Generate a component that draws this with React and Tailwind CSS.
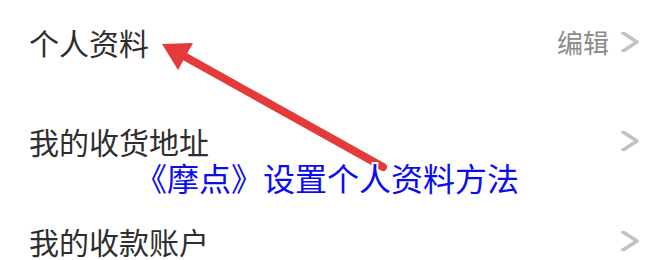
import React from "react";

const rows = [
  { label: "个人资料", extra: "编辑" },
  { label: "我的收货地址" },
  { label: "我的收款账户" },
];

function Chevron() {
  return (
    <svg width="18" height="20" viewBox="0 0 18 20" className="shrink-0">
      <polyline
        points="2,1 16,10 2,19"
        fill="none"
        stroke="#c2c2c2"
        strokeWidth="3.6"
        strokeLinecap="round"
        strokeLinejoin="round"
      />
    </svg>
  );
}

export default function App() {
  return (
    <div
      className="relative h-[260px] w-[650px] overflow-hidden bg-white"
      style={{ fontFamily: '"Noto Sans CJK SC", "Noto Sans", sans-serif' }}
    >
      <div className="flex flex-col pl-[29px] pr-[11px] pt-[27px]">
        {rows.map((row, i) => (
          <div
            key={row.label}
            className={`flex h-[30px] items-center justify-between ${i === 1 ? "mt-[69px]" : i === 2 ? "mt-[70px]" : ""}`}
          >
            <span className="text-[30px] leading-[30px] text-[#2e2e2e]">{row.label}</span>
            <div className="flex items-center gap-[12px]">
              {row.extra && (
                <span className="text-[26px] leading-[30px] text-[#8c8c8c]">{row.extra}</span>
              )}
              <Chevron />
            </div>
          </div>
        ))}
      </div>

      {/* red arrow */}
      <svg
        className="absolute left-0 top-0"
        width="650"
        height="260"
        viewBox="0 0 650 260"
      >
        <line
          x1="383"
          y1="167"
          x2="182"
          y2="55"
          stroke="#e53a3a"
          strokeWidth="8"
          strokeLinecap="round"
        />
        <polygon points="162,44 193,43 178,70" fill="#e53a3a" />
      </svg>

      {/* caption */}
      <div
        className="absolute left-[135px] top-[161px] whitespace-nowrap text-[32px] leading-[32px] text-[#0a0af5] [-webkit-text-stroke:4px_#ffffff] [paint-order:stroke_fill]"
      >
        《摩点》设置个人资料方法
      </div>
    </div>
  );
}
